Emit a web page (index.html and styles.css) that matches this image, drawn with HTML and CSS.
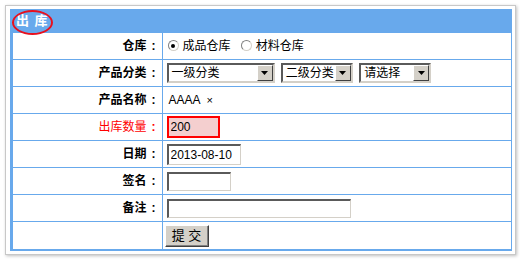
FILE: index.html
```html
<!DOCTYPE html>
<html lang="zh-CN">
<head>
  <meta charset="UTF-8">
  <title>出库</title>
  <link rel="stylesheet" href="styles.css">
</head>
<body>
  <div class="frame">
    <div class="panel">
      <div class="panel-head">
        <span class="head-title">出 库</span>
        <span class="mark"></span>
      </div>
      <table class="form">
        <colgroup>
          <col class="col-label">
          <col>
        </colgroup>
        <tr>
          <th>仓库<span class="colon">:</span></th>
          <td>
            <span class="radio checked"></span><span class="opt">成品仓库</span>
            <span class="radio"></span><span class="opt">材料仓库</span>
          </td>
        </tr>
        <tr>
          <th>产品分类<span class="colon">:</span></th>
          <td>
            <span class="select wide"><span class="select-text">一级分类</span><span class="select-btn"><svg width="7" height="4" viewBox="0 0 7 4"><path d="M0 0h7L3.5 4z" fill="#000"/></svg></span></span>
            <span class="select"><span class="select-text">二级分类</span><span class="select-btn"><svg width="7" height="4" viewBox="0 0 7 4"><path d="M0 0h7L3.5 4z" fill="#000"/></svg></span></span>
            <span class="select"><span class="select-text">请选择</span><span class="select-btn"><svg width="7" height="4" viewBox="0 0 7 4"><path d="M0 0h7L3.5 4z" fill="#000"/></svg></span></span>
          </td>
        </tr>
        <tr>
          <th>产品名称<span class="colon">:</span></th>
          <td><span class="product">AAAA</span><span class="remove">×</span></td>
        </tr>
        <tr>
          <th class="required">出库数量<span class="colon">:</span></th>
          <td><input class="field qty" type="text" value="200"></td>
        </tr>
        <tr>
          <th>日期<span class="colon">:</span></th>
          <td><input class="field date" type="text" value="2013-08-10"></td>
        </tr>
        <tr>
          <th>签名<span class="colon">:</span></th>
          <td><input class="field sign" type="text"></td>
        </tr>
        <tr>
          <th>备注<span class="colon">:</span></th>
          <td><input class="field note" type="text"></td>
        </tr>
        <tr>
          <th></th>
          <td><button class="submit" type="button">提 交</button></td>
        </tr>
      </table>
    </div>
  </div>
</body>
</html>
```

FILE: styles.css
```css
body {
  margin: 0;
  background: #fff;
  font-family: "Liberation Sans", "Noto Sans CJK SC", sans-serif;
  font-size: 12px;
  color: #000;
}
.frame {
  margin: 5px;
  width: 502px;
  height: 242px;
  padding: 3px 3px 3px 4px;
  border: 1px solid #c8c8c8;
  box-shadow: 1px 1px 3px rgba(0, 0, 0, 0.25);
}
.panel {
  background: #68a9ec;
  padding: 0 1px 2px 3px;
  height: 240px;
}
.panel-head {
  position: relative;
  height: 24px;
  margin-left: -3px;
  padding-left: 6px;
  display: flex;
  align-items: center;
}
.head-title {
  color: #fff;
  font-weight: bold;
  font-size: 13px;
  letter-spacing: 1px;
  line-height: 16px;
}
.mark {
  position: absolute;
  left: 2px;
  top: 1px;
  width: 37px;
  height: 21px;
  border: 2px solid #e8101e;
  border-radius: 50%;
}
.form {
  width: 100%;
  table-layout: fixed;
  border-collapse: collapse;
  background: #fff;
}
.col-label {
  width: 149px;
}
.form th, .form td {
  height: 26px;
  padding: 0;
  border-bottom: 1px solid #68a9ec;
  line-height: 16px;
}
.form tr:last-child th, .form tr:last-child td {
  border-bottom: 0;
  height: 27px;
}
.form th {
  text-align: right;
  padding-right: 1px;
  border-right: 1px solid #68a9ec;
  font-weight: bold;
  white-space: nowrap;
}
.form th.required {
  color: #f00;
  font-weight: normal;
}
.colon {
  display: inline-block;
  width: 14px;
  text-align: center;
  font-weight: bold;
}
.form td {
  padding-left: 4px;
  white-space: nowrap;
}
.radio {
  display: inline-block;
  vertical-align: -1px;
  width: 9px;
  height: 9px;
  margin: 0 4px 0 1px;
  border: 1px solid;
  border-color: #808080 #d4d0c8 #d4d0c8 #808080;
  border-radius: 50%;
  background: #fff;
  position: relative;
}
.radio.checked::after {
  content: "";
  position: absolute;
  left: 2.5px;
  top: 2.5px;
  width: 4px;
  height: 4px;
  border-radius: 50%;
  background: #000;
}
.opt {
  margin-right: 6px;
}
.select {
  display: inline-flex;
  vertical-align: middle;
  width: 68px;
  height: 16px;
  margin-right: 3px;
  border: 2px solid;
  border-color: #5a5a5a #d4d0c8 #d4d0c8 #5a5a5a;
  background: #fff;
}
.select.wide {
  width: 104px;
}
.select-text {
  flex: 1;
  padding-left: 3px;
  line-height: 16px;
}
.select-btn {
  width: 14px;
  height: 14px;
  background: #d4d0c8;
  border: 1px solid;
  border-color: #fff #404040 #404040 #fff;
  display: flex;
  align-items: center;
  justify-content: center;
}
.product {
  margin-left: 2px;
}
.remove {
  margin-left: 6px;
  font-size: 11px;
}
.field {
  font: inherit;
  height: 16px;
  padding: 0 2px;
  margin: 0;
  vertical-align: middle;
  border-style: solid;
  border-width: 2px 1px 1px 2px;
  border-color: #5a5a5a #d4d0c8 #d4d0c8 #5a5a5a;
  background: #fff;
  outline: none;
}
.field.qty {
  width: 45px;
  height: 18px;
  border: 2px solid #f00;
  background: #f4cfcf;
}
.field.date {
  width: 67px;
  height: 18px;
}
.field.sign {
  width: 57px;
}
.field.note {
  width: 177px;
}
.submit {
  font: inherit;
  font-size: 13px;
  width: 44px;
  height: 22px;
  padding: 0;
  margin-left: -2px;
  background: #d4d0c8;
  border: 1px solid;
  border-color: #fff #404040 #404040 #fff;
  box-shadow: inset -1px -1px 0 #808080;
}
```
